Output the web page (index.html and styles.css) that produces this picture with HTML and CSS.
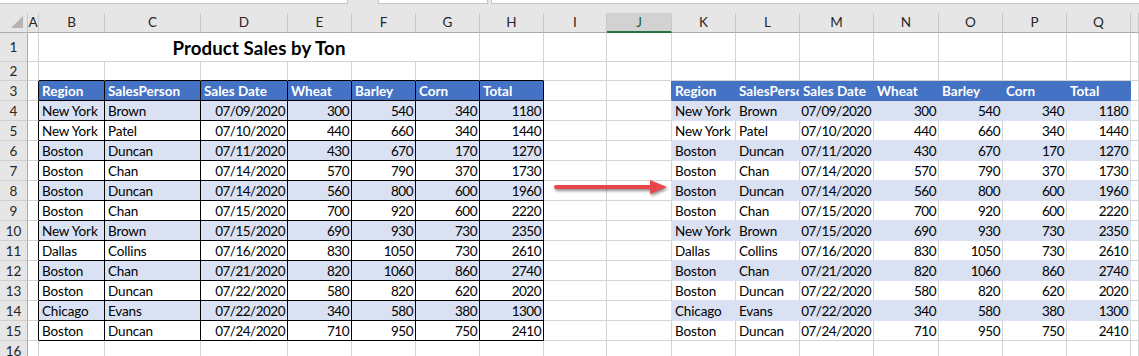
FILE: index.html
```html
<!DOCTYPE html>
<html lang="en">
<head>
    <meta charset="UTF-8">
    <title>Product Sales by Ton</title>
    <link rel="stylesheet" href="styles.css">
</head>
<body>
    <div class="topbar">
        <div class="box box-name"></div>
        <div class="box box-mid"></div>
        <div class="box box-formula"></div>
    </div>
    <div class="sheet" id="sheet"></div>
    <svg class="arrow" width="125" height="26" viewBox="0 0 125 26">
        <line x1="6" y1="12" x2="104" y2="12" stroke="#e8464b" stroke-width="4" stroke-linecap="round"/>
        <polygon points="100,5 117,12 100,19" fill="#e8464b"/>
    </svg>

    <script>
        const cols = ['A','B','C','D','E','F','G','H','I','J','K','L','M','N','O','P','Q','R'];
        const head = ['Region', 'SalesPerson', 'Sales Date', 'Wheat', 'Barley', 'Corn', 'Total'];
        const data = [
            ['New York', 'Brown', '07/09/2020', 300, 540, 340, 1180],
            ['New York', 'Patel', '07/10/2020', 440, 660, 340, 1440],
            ['Boston', 'Duncan', '07/11/2020', 430, 670, 170, 1270],
            ['Boston', 'Chan', '07/14/2020', 570, 790, 370, 1730],
            ['Boston', 'Duncan', '07/14/2020', 560, 800, 600, 1960],
            ['Boston', 'Chan', '07/15/2020', 700, 920, 600, 2220],
            ['New York', 'Brown', '07/15/2020', 690, 930, 730, 2350],
            ['Dallas', 'Collins', '07/16/2020', 830, 1050, 730, 2610],
            ['Boston', 'Chan', '07/21/2020', 820, 1060, 860, 2740],
            ['Boston', 'Duncan', '07/22/2020', 580, 820, 620, 2020],
            ['Chicago', 'Evans', '07/22/2020', 340, 580, 380, 1300],
            ['Boston', 'Duncan', '07/24/2020', 710, 950, 750, 2410]
        ];
        const sheet = document.getElementById('sheet');

        function add(cls, text) {
            const div = document.createElement('div');
            div.className = cls;
            if (text !== undefined) div.textContent = text;
            sheet.appendChild(div);
            return div;
        }

        // column headers
        add('corner').innerHTML = '<span class="tri"></span>';
        cols.forEach(c => add('colhdr' + (c === 'J' ? ' selected' : ''), c === 'R' ? '' : c));

        for (let r = 1; r <= 16; r++) {
            add('rowhdr', r);
            const kind = r === 3 ? 'hd' : (r >= 4 && r <= 15 ? (r % 2 === 0 ? 'band' : 'plain') : '');
            const rec = r === 3 ? head : (r >= 4 && r <= 15 ? data[r - 4] : null);

            for (let c = 0; c < cols.length; c++) {
                const col = cols[c];
                if (r === 1 && col === 'B') {
                    add('cell title', 'Product Sales by Ton');
                    c += 5;
                    continue;
                }
                let cls = 'cell';
                let text = '';
                if (col === 'A' && rec) cls += ' lt-edge';
                if (r === 2 && c >= 1 && c <= 7) cls += ' lt-top';
                if (rec && c >= 1 && c <= 7) {
                    cls += ' lt ' + kind;
                    text = rec[c - 1];
                    if (r > 3 && c >= 3) cls += ' num';
                }
                if (col === 'J' && rec) cls += ' next-' + kind;
                if (rec && c >= 10 && c <= 16) {
                    cls += ' rt ' + kind;
                    if (kind === 'plain' && r < 15) cls += ' before-band';
                    text = rec[c - 10];
                    if (r > 3 && c >= 12) cls += ' num';
                }
                add(cls, text);
            }
        }
    </script>
</body>
</html>
```

FILE: styles.css
```css
body {
    margin: 0;
    padding: 0;
    background-color: #ffffff;
    font-family: Lato, 'Liberation Sans', sans-serif;
    font-size: 13.5px;
    color: #000000;
    overflow: hidden;
    position: relative;
}
.topbar {
    display: flex;
    height: 13px;
    background-color: #e6e6e6;
}
.box {
    height: 3px;
    background-color: #ffffff;
    border: 1px solid #c6c6c6;
    border-top: none;
}
.box-name {
    width: 347px;
    margin-right: 30px;
    border-left: none;
}
.box-mid {
    width: 108px;
    margin-right: 3px;
}
.box-formula {
    flex-grow: 1;
    border-right: none;
}
.sheet {
    display: grid;
    grid-template-columns: 28px 11px 66px 96px 87px 64px 64px 64px 64px 63px 65px 64px 64px 74px 65px 64px 64px 64px 1fr;
    grid-template-rows: 20px 29px 19px repeat(13, 20px) 20px;
}
.corner {
    display: flex;
    justify-content: flex-end;
    align-items: flex-end;
    padding: 0 4px 4px 0;
    background-color: #e6e6e6;
    border-right: 1px solid #c8c8c8;
    border-bottom: 1px solid #ababab;
}
.tri {
    width: 0;
    height: 0;
    border-left: 12px solid transparent;
    border-bottom: 12px solid #b4b4b4;
}
.colhdr {
    background-color: #e6e6e6;
    border-right: 1px solid #c8c8c8;
    border-bottom: 1px solid #ababab;
    color: #262626;
    text-align: center;
    line-height: 19px;
    overflow: hidden;
}
.colhdr.selected {
    background-color: #d2d2d2;
    border-bottom: 2px solid #217346;
    color: #1e5c3a;
    line-height: 18px;
}
.rowhdr {
    background-color: #e6e6e6;
    border-right: 1px solid #ababab;
    border-bottom: 1px solid #cfcfcf;
    color: #262626;
    display: flex;
    align-items: center;
    justify-content: center;
}
.cell {
    box-sizing: border-box;
    border-right: 1px solid #d4d4d4;
    border-bottom: 1px solid #d4d4d4;
    padding: 0 3px;
    letter-spacing: -0.15px;
    white-space: nowrap;
    overflow: hidden;
    display: flex;
    align-items: center;
}
.cell.num {
    justify-content: flex-end;
    padding-right: 2px;
    letter-spacing: -0.5px;
}
.title {
    grid-column: span 6;
    justify-content: center;
    font-size: 18.67px;
    font-weight: bold;
    letter-spacing: 0.1px;
    padding-top: 1px;
}

/* left table: black borders */
.lt {
    border-right-color: #000000;
    border-bottom-color: #000000;
}
.lt-edge {
    border-right-color: #000000;
}
.lt-top {
    border-bottom-color: #000000;
}

/* fills */
.hd {
    background-color: #4472c4;
    color: #ffffff;
    font-weight: bold;
    letter-spacing: 0;
}
.band {
    background-color: #d9e1f2;
}

/* right table: fills hide gridlines */
.rt.hd {
    border-color: #4472c4;
}
.rt.band {
    border-color: #d9e1f2;
}
.rt.before-band {
    border-bottom-color: #d9e1f2;
}
.next-hd {
    border-right-color: #4472c4;
}
.next-band {
    border-right-color: #d9e1f2;
}

.arrow {
    position: absolute;
    left: 550px;
    top: 175px;
    filter: drop-shadow(1px 2px 1.5px rgba(0, 0, 0, 0.45));
}
```
